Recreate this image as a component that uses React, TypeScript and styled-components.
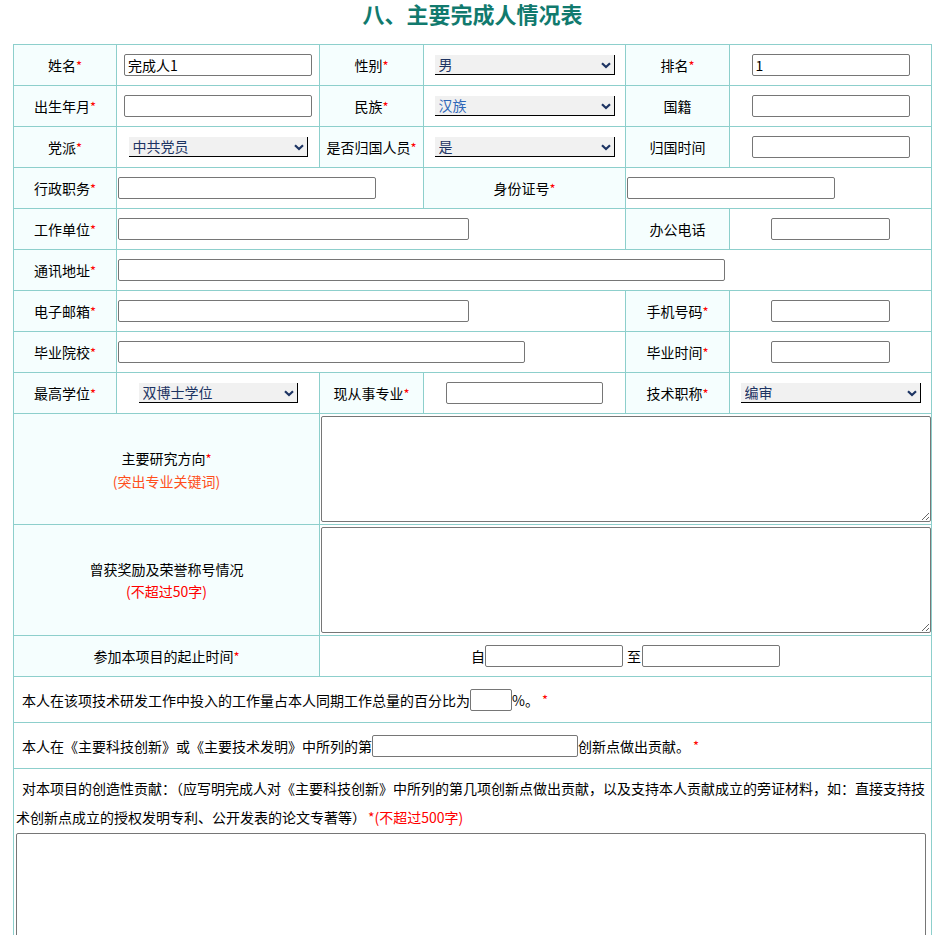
import React from "react";
import styled, { createGlobalStyle } from "styled-components";

const FONT = `"Noto Sans CJK SC", "Microsoft YaHei", sans-serif`;
const LINE = "#8dcfcc";

const Global = createGlobalStyle`
  html, body { margin: 0; padding: 0; background: #fff; }
  body { font-family: ${FONT}; color: #000; }
`;

const Page = styled.div`
  width: 919px;
  padding-left: 13px;
`;

const Title = styled.h1`
  margin: 0;
  height: 44px;
  padding-top: 2px;
  box-sizing: border-box;
  line-height: 23px;
  font-size: 22px;
  font-weight: bold;
  color: #117a6e;
  text-align: center;
  font-family: ${FONT};
`;

const Grid = styled.div`
  display: grid;
  grid-template-columns: 102px 202px 103px 201px 103px 201px;
  grid-template-rows: repeat(9, 40px) 110px 110px 40px 45px 45px auto;
  gap: 1px;
  background: ${LINE};
  border: 1px solid ${LINE};
`;

const Cell = styled.div<{ $label?: boolean; $span?: number; $justify?: string; $padL?: number }>`
  grid-column: span ${(p) => p.$span ?? 1};
  background: ${(p) => (p.$label ? "#f5fefe" : "#fff")};
  display: flex;
  flex-direction: ${(p) => (p.$label ? "column" : "row")};
  align-items: center;
  justify-content: ${(p) => p.$justify ?? "center"};
  padding-left: ${(p) => p.$padL ?? 0}px;
  font-size: 14px;
  line-height: 22px;
  min-width: 0;
`;

const FullCell = styled.div`
  grid-column: span 6;
  background: #fff;
  font-size: 14px;
  line-height: 29px;
  padding: 5px 4px 0 2px;
  text-indent: 6px;
  overflow: hidden;
  height: 166px;
`;

const Star = styled.span<{ $gap?: number }>`
  color: #ff0000;
  font-size: 13px;
  margin-left: ${(p) => p.$gap ?? 0}px;
`;

const Hint = styled.span<{ $tone?: "orange" | "red"; $gap?: number }>`
  color: ${(p) => (p.$tone === "orange" ? "#ff4f1c" : "#ff0000")};
  margin-left: ${(p) => p.$gap ?? 0}px;
`;

const TextInput = styled.input<{ $w: number }>`
  box-sizing: border-box;
  width: ${(p) => p.$w}px;
  height: 22px;
  border: 1px solid #767676;
  border-radius: 2px;
  padding: 0 3px;
  font: 14px ${FONT};
  color: #000;
  background: #fff;
  outline: none;
`;

const SelectBox = styled.div<{ $w: number }>`
  position: relative;
  width: ${(p) => p.$w}px;
  height: 20px;
  overflow: hidden;
  background: #f1f1f1;
`;

const Select = styled.select<{ $blue?: boolean }>`
  appearance: none;
  -webkit-appearance: none;
  box-sizing: border-box;
  display: block;
  width: 100%;
  height: 22px;
  margin: -2px 0 0 0;
  padding: 0 20px 0 4px;
  background: #f1f1f1;
  border: none;
  border-bottom: 1px solid #000;
  border-right: 1px solid #000;
  border-radius: 0;
  font-family: ${FONT};
  font-size: 14px;
  color: ${(p) => (p.$blue ? "#2f67b8" : "#1d3463")};
  outline: none;
`;

const Chevron = styled.svg`
  position: absolute;
  right: 4px;
  top: 7px;
  pointer-events: none;
`;

const TextArea = styled.textarea<{ $w: number; $h: number }>`
  box-sizing: border-box;
  display: block;
  width: ${(p) => p.$w}px;
  height: ${(p) => p.$h}px;
  border: 1px solid #767676;
  border-radius: 2px;
  font: 14px ${FONT};
  padding: 2px;
  margin: 0;
  background: #fff;
  outline: none;
`;

const Inline = styled.div`
  display: flex;
  align-items: center;
  white-space: nowrap;
`;

const Sep = styled.span`
  margin: 0 1px 0 4px;
`;

const FullRow = styled.div`
  grid-column: span 6;
  background: #fff;
  display: flex;
  align-items: center;
  padding-left: 8px;
  font-size: 14px;
  white-space: nowrap;
`;

const AreaBelow = styled.div`
  text-indent: 0;
  padding-top: 1px;
`;

function Label({ text, req = true }: { text: string; req?: boolean }) {
  return (
    <Cell $label>
      <span>
        {text}
        {req && <Star>*</Star>}
      </span>
    </Cell>
  );
}

function Drop({ w, value, blue }: { w: number; value: string; blue?: boolean }) {
  return (
    <SelectBox $w={w}>
      <Select $blue={blue} defaultValue={value}>
        <option>{value}</option>
      </Select>
      <Chevron width="10" height="7" viewBox="0 0 10 7">
        <polyline points="1,1.2 5,5 9,1.2" fill="none" stroke="#1d3463" strokeWidth="2.2" />
      </Chevron>
    </SelectBox>
  );
}

export default function App() {
  return (
    <Page>
      <Global />
      <Title>八、主要完成人情况表</Title>
      <Grid>
        {/* row 1 */}
        <Label text="姓名" />
        <Cell>
          <TextInput $w={188} defaultValue="完成人1" />
        </Cell>
        <Label text="性别" />
        <Cell>
          <Drop w={180} value="男" />
        </Cell>
        <Label text="排名" />
        <Cell>
          <TextInput $w={158} defaultValue="1" />
        </Cell>

        {/* row 2 */}
        <Label text="出生年月" />
        <Cell>
          <TextInput $w={188} />
        </Cell>
        <Label text="民族" />
        <Cell>
          <Drop w={180} value="汉族" blue />
        </Cell>
        <Label text="国籍" req={false} />
        <Cell>
          <TextInput $w={158} />
        </Cell>

        {/* row 3 */}
        <Label text="党派" />
        <Cell>
          <Drop w={179} value="中共党员" />
        </Cell>
        <Label text="是否归国人员" />
        <Cell>
          <Drop w={180} value="是" />
        </Cell>
        <Label text="归国时间" req={false} />
        <Cell>
          <TextInput $w={158} />
        </Cell>

        {/* row 4 */}
        <Label text="行政职务" />
        <Cell $span={2} $justify="flex-start" $padL={1}>
          <TextInput $w={258} />
        </Cell>
        <Label text="身份证号" />
        <Cell $span={2} $justify="flex-start" $padL={1}>
          <TextInput $w={208} />
        </Cell>

        {/* row 5 */}
        <Label text="工作单位" />
        <Cell $span={3} $justify="flex-start" $padL={1}>
          <TextInput $w={351} />
        </Cell>
        <Label text="办公电话" req={false} />
        <Cell>
          <TextInput $w={119} />
        </Cell>

        {/* row 6 */}
        <Label text="通讯地址" />
        <Cell $span={5} $justify="flex-start" $padL={1}>
          <TextInput $w={607} />
        </Cell>

        {/* row 7 */}
        <Label text="电子邮箱" />
        <Cell $span={3} $justify="flex-start" $padL={1}>
          <TextInput $w={351} />
        </Cell>
        <Label text="手机号码" />
        <Cell>
          <TextInput $w={119} />
        </Cell>

        {/* row 8 */}
        <Label text="毕业院校" />
        <Cell $span={3} $justify="flex-start" $padL={1}>
          <TextInput $w={407} />
        </Cell>
        <Label text="毕业时间" />
        <Cell>
          <TextInput $w={119} />
        </Cell>

        {/* row 9 */}
        <Label text="最高学位" />
        <Cell>
          <Drop w={159} value="双博士学位" />
        </Cell>
        <Label text="现从事专业" />
        <Cell>
          <TextInput $w={157} />
        </Cell>
        <Label text="技术职称" />
        <Cell>
          <Drop w={180} value="编审" />
        </Cell>

        {/* row 10 */}
        <Cell $label $span={2}>
          <span>
            主要研究方向<Star>*</Star>
          </span>
          <Hint $tone="orange">(突出专业关键词)</Hint>
        </Cell>
        <Cell $span={4} $justify="flex-start" $padL={1}>
          <TextArea $w={610} $h={106} />
        </Cell>

        {/* row 11 */}
        <Cell $label $span={2}>
          <span>曾获奖励及荣誉称号情况</span>
          <Hint>(不超过50字)</Hint>
        </Cell>
        <Cell $span={4} $justify="flex-start" $padL={1}>
          <TextArea $w={610} $h={106} />
        </Cell>

        {/* row 12 */}
        <Cell $label $span={2}>
          <span>
            参加本项目的起止时间<Star>*</Star>
          </span>
        </Cell>
        <Cell $span={4}>
          <Inline>
            <span>自</span>
            <TextInput $w={138} />
            <Sep>至</Sep>
            <TextInput $w={138} />
          </Inline>
        </Cell>

        {/* row 13 */}
        <FullRow>
          本人在该项技术研发工作中投入的工作量占本人同期工作总量的百分比为
          <TextInput $w={42} />
          %。<Star $gap={3}>*</Star>
        </FullRow>

        {/* row 14 */}
        <FullRow>
          本人在《主要科技创新》或《主要技术发明》中所列的第
          <TextInput $w={206} />
          创新点做出贡献。<Star $gap={3}>*</Star>
        </FullRow>

        {/* row 15 */}
        <FullCell>
          对本项目的创造性贡献：（应写明完成人对《主要科技创新》中所列的第几项创新点做出贡献，以及支持本人贡献成立的旁证材料，如：直接支持技术创新点成立的授权发明专利、公开发表的论文专著等）
          <Hint $gap={2}>*(不超过500字)</Hint>
          <AreaBelow>
            <TextArea $w={910} $h={130} />
          </AreaBelow>
        </FullCell>
      </Grid>
    </Page>
  );
}
